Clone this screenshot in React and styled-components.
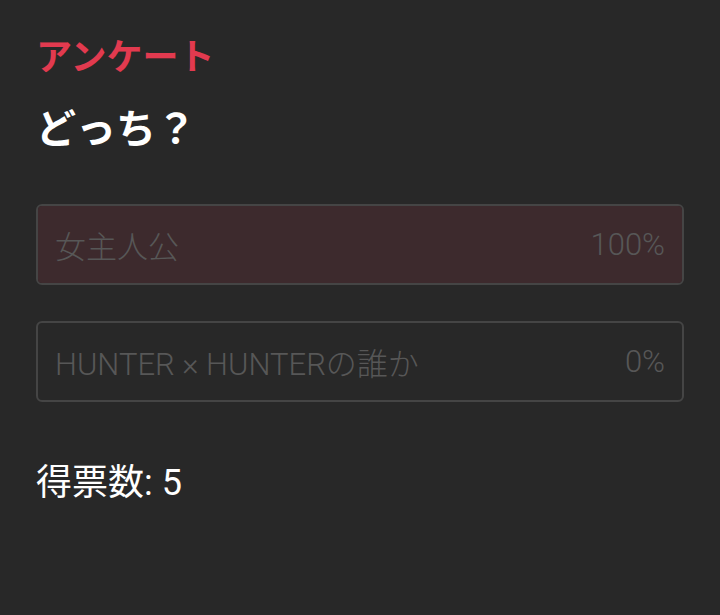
import styled, { createGlobalStyle } from 'styled-components';

const GlobalStyle = createGlobalStyle`
  html, body {
    margin: 0;
    padding: 0;
    background: #282828;
  }
  body {
    font-family: Roboto, "Noto Sans CJK JP", sans-serif;
  }
`;

const Poll = styled.div`
  padding: 34px 36px 40px;
  display: flex;
  flex-direction: column;
`;

const Label = styled.div`
  color: #e23a4f;
  font-size: 36px;
  font-weight: 700;
  line-height: 48px;
`;

const Question = styled.h2`
  margin: 21px 0 0;
  color: #fff;
  font-size: 40px;
  font-weight: 700;
  line-height: 54px;
`;

const Options = styled.div`
  display: flex;
  flex-direction: column;
  gap: 36px;
  margin-top: 47px;
`;

const Option = styled.div`
  position: relative;
  height: 81px;
  box-sizing: border-box;
  border: 2px solid #454545;
  border-radius: 6px;
  overflow: hidden;
  display: flex;
  align-items: center;
  justify-content: space-between;
  padding: 0 17px;
  color: #575757;
  font-size: 31px;
  font-weight: 300;
`;

const Fill = styled.div`
  position: absolute;
  left: 0;
  top: 0;
  bottom: 0;
  background: #3d2a2d;
`;

const OptionText = styled.span`
  position: relative;
`;

const Votes = styled.div`
  margin-top: 59px;
  color: #fff;
  font-size: 36px;
  line-height: 44px;
`;

const choices = [
  { label: '女主人公', percent: 100 },
  { label: 'HUNTER × HUNTERの誰か', percent: 0 },
];

export default function App() {
  return (
    <>
      <GlobalStyle />
      <Poll>
        <Label>アンケート</Label>
        <Question>どっち？</Question>
        <Options>
          {choices.map((c) => (
            <Option key={c.label}>
              <Fill style={{ width: `${c.percent}%` }} />
              <OptionText>{c.label}</OptionText>
              <OptionText>{c.percent}%</OptionText>
            </Option>
          ))}
        </Options>
        <Votes>得票数: 5</Votes>
      </Poll>
    </>
  );
}
